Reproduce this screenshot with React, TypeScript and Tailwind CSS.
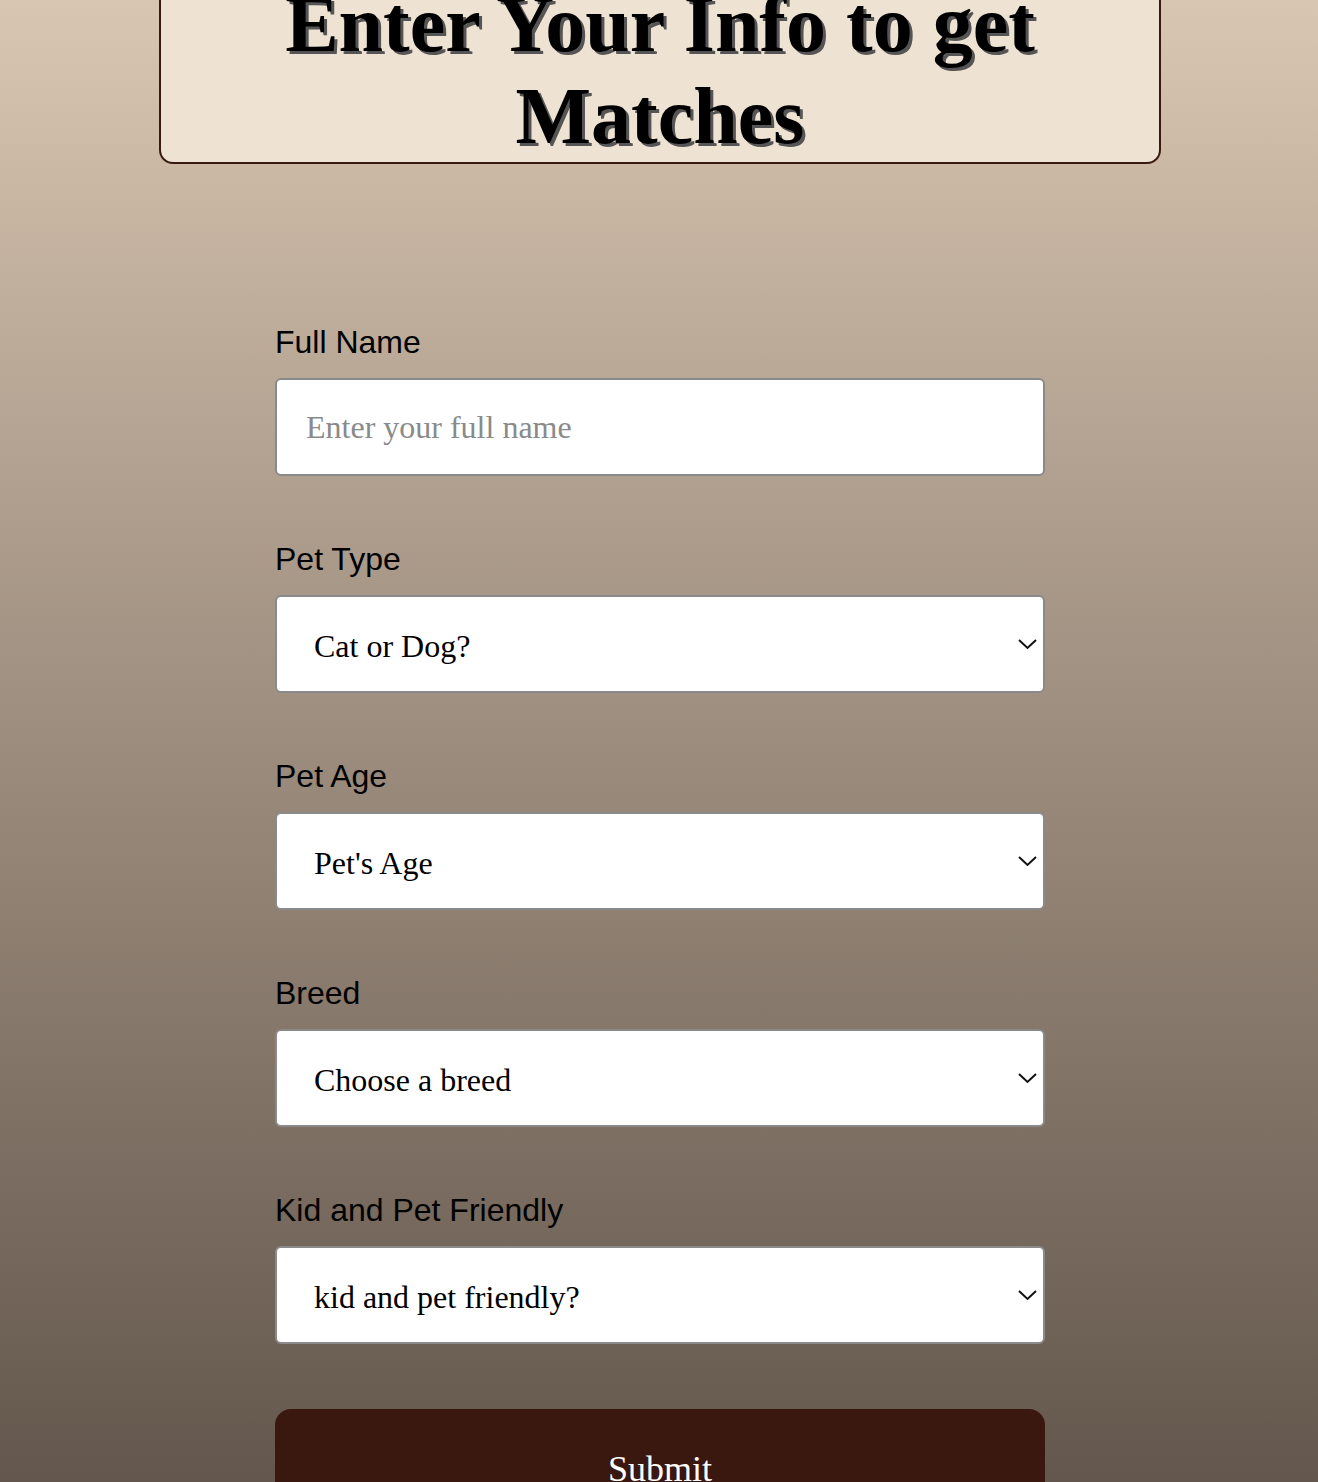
const selects = [
  { label: "Pet Type", placeholder: "Cat or Dog?" },
  { label: "Pet Age", placeholder: "Pet's Age" },
  { label: "Breed", placeholder: "Choose a breed" },
  { label: "Kid and Pet Friendly", placeholder: "kid and pet friendly?" },
];

const Chevron = () => (
  <svg
    className="pointer-events-none absolute right-[8px] top-1/2 -translate-y-1/2"
    width="19"
    height="11"
    viewBox="0 0 19 11"
    fill="none"
  >
    <path d="M1 1.5 L9.5 9.5 L18 1.5" stroke="#111" strokeWidth="2" />
  </svg>
);

export default function App() {
  return (
    <div className="min-h-[1482px] overflow-hidden bg-gradient-to-b from-[#d9c6b2] to-[#5d5147]">
      <div className="ml-[159px] mt-[-24px] w-[1002px] rounded-b-[14px] border-2 border-[#3a1a10] bg-[#eee2d3] text-center">
        <h1 className="font-['Liberation_Serif',serif] text-[80px] font-bold leading-[92px] text-black [text-shadow:3px_3px_0_#555]">
          Enter Your Info to get
          <br />
          Matches
        </h1>
      </div>

      <form className="ml-[275px] mt-[160px] flex w-[770px] flex-col gap-[65px] pb-10">
        <div className="flex flex-col gap-[17px]">
          <label className="font-['Liberation_Sans',Arial,sans-serif] text-[32px] leading-[37px] text-black">
            Full Name
          </label>
          <input
            type="text"
            placeholder="Enter your full name"
            className="h-[98px] w-full rounded-[6px] border-2 border-[#8a8a8a] bg-white px-[29px] font-['Liberation_Serif',serif] text-[32px] text-black outline-none placeholder:text-[#8a8a8a]"
          />
        </div>

        {selects.map((s) => (
          <div key={s.label} className="flex flex-col gap-[17px]">
            <label className="font-['Liberation_Sans',Arial,sans-serif] text-[32px] leading-[37px] text-black">
              {s.label}
            </label>
            <div className="relative">
              <select
                defaultValue=""
                className="h-[98px] w-full appearance-none rounded-[6px] border-2 border-[#8a8a8a] bg-white pl-[37px] pt-[4px] font-['Liberation_Serif',serif] text-[32px] text-black outline-none"
              >
                <option value="" disabled>
                  {s.placeholder}
                </option>
              </select>
              <Chevron />
            </div>
          </div>
        ))}

        <button
          type="button"
          className="h-[120px] w-full rounded-[16px] bg-[#3a170f] pb-[22px] pt-[22px] font-['Liberation_Serif',serif] text-[36px] leading-[41px] text-white"
        >
          Submit
        </button>
      </form>
    </div>
  );
}
